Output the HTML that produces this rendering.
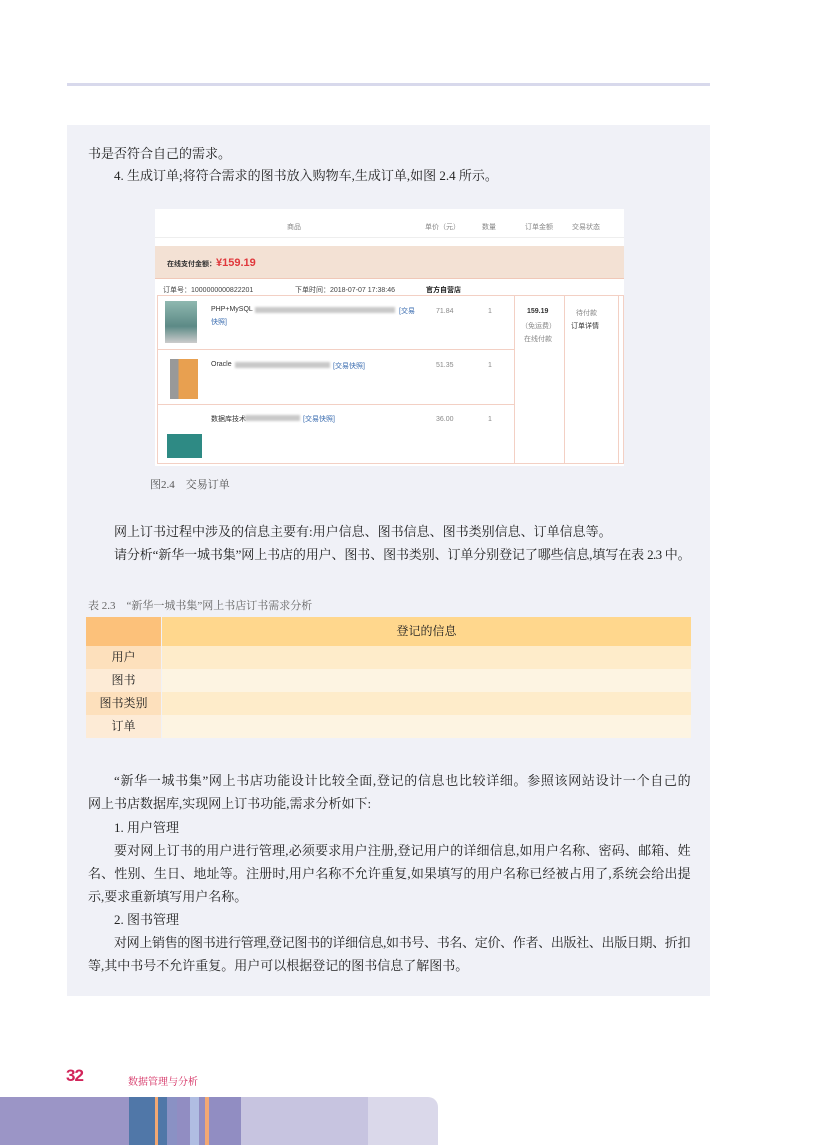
<!DOCTYPE html>
<html><head><meta charset="utf-8"><style>
*{margin:0;padding:0;box-sizing:border-box}
body{width:816px;height:1145px;background:#fff;position:relative;overflow:hidden;font-family:"Liberation Serif","Noto Serif CJK SC",serif;color:#222}
.a{position:absolute}
.ln{position:absolute;left:88px;width:602px;font-size:13px;line-height:16px;white-space:nowrap}
.j{text-align:justify;text-align-last:justify;letter-spacing:-0.6px}
.s{font-family:"Liberation Sans","Noto Sans CJK SC",sans-serif}
.fig{left:155px;top:209px;width:469px;height:257px;background:#fff;font-family:"Liberation Sans","Noto Sans CJK SC",sans-serif;font-size:7px;color:#888}
.bl{background:#c9c9c9;filter:blur(1px);position:absolute;height:6px}
.lk{color:#3a6cb0}
</style></head><body>
<div class="a" style="left:67px;top:83px;width:643px;height:3px;background:#d8d9ec"></div>
<div class="a" style="left:67px;top:125px;width:643px;height:871px;background:#f0f1f7"></div>

<div class="ln" style="top:146px">书是否符合自己的需求。</div>
<div class="ln" style="top:168px;left:114px">4. 生成订单;将符合需求的图书放入购物车,生成订单,如图 2.4 所示。</div>

<div class="a fig">
 <div class="a" style="left:0;top:3px;width:469px;height:26px;border-bottom:1px solid #eee"></div>
 <div class="a" style="left:132px;top:13px">商品</div>
 <div class="a" style="left:270px;top:13px">单价（元）</div>
 <div class="a" style="left:327px;top:13px">数量</div>
 <div class="a" style="left:370px;top:13px">订单金额</div>
 <div class="a" style="left:417px;top:13px">交易状态</div>
 <div class="a" style="left:0;top:37px;width:469px;height:33px;background:#f3e1d4;border-bottom:1px solid #f0c8b8"></div>
 <div class="a" style="left:12px;top:48px;color:#333;font-weight:bold">在线支付金额：<span style="color:#e0383c;font-size:11px">¥159.19</span></div>
 <div class="a" style="left:8px;top:76px;color:#444">订单号：1000000000822201</div>
 <div class="a" style="left:140px;top:76px;color:#444">下单时间：2018-07-07 17:38:46</div>
 <div class="a" style="left:271px;top:76px;color:#222;font-weight:bold">官方自营店</div>
 <div class="a" style="left:2px;top:86px;width:467px;height:169px;border:1px solid #f3d0c4"></div>
 <div class="a" style="left:2px;top:140px;width:358px;height:1px;background:#f3d0c4"></div>
 <div class="a" style="left:2px;top:195px;width:358px;height:1px;background:#f3d0c4"></div>
 <div class="a" style="left:359px;top:86px;width:1px;height:169px;background:#f3d0c4"></div>
 <div class="a" style="left:409px;top:86px;width:1px;height:169px;background:#f3d0c4"></div>
 <div class="a" style="left:463px;top:86px;width:1px;height:169px;background:#f3d0c4"></div>
 <div class="a" style="left:10px;top:92px;width:32px;height:42px;background:linear-gradient(#8fb8b0,#5c8a86 60%,#ccc)"></div>
 <div class="a" style="left:15px;top:150px;width:28px;height:40px;background:linear-gradient(90deg,#999 30%,#e8a050 30%)"></div>
 <div class="a" style="left:12px;top:225px;width:35px;height:24px;background:#2e8a84"></div>
 <div class="a" style="left:56px;top:97px;color:#333">PHP+MySQL</div><div class="bl" style="left:100px;top:98px;width:140px"></div><div class="a lk" style="left:244px;top:97px">[交易</div><div class="a lk" style="left:56px;top:108px">快照]</div>
 <div class="a" style="left:56px;top:152px;color:#333">Oracle</div><div class="bl" style="left:80px;top:153px;width:95px"></div><div class="a lk" style="left:178px;top:152px">[交易快照]</div>
 <div class="a" style="left:56px;top:205px;color:#333">数据库技术</div><div class="bl" style="left:90px;top:206px;width:55px"></div><div class="a lk" style="left:148px;top:205px">[交易快照]</div>
 <div class="a" style="left:281px;top:99px">71.84</div><div class="a" style="left:333px;top:99px">1</div>
 <div class="a" style="left:281px;top:153px">51.35</div><div class="a" style="left:333px;top:153px">1</div>
 <div class="a" style="left:281px;top:207px">36.00</div><div class="a" style="left:333px;top:207px">1</div>
 <div class="a" style="left:372px;top:99px;color:#333;font-weight:bold">159.19</div>
 <div class="a" style="left:366px;top:112px">（免运费）</div>
 <div class="a" style="left:369px;top:125px">在线付款</div>
 <div class="a" style="left:421px;top:99px">待付款</div>
 <div class="a" style="left:416px;top:112px;color:#333">订单详情</div>
</div>

<div class="a" style="left:150px;top:476px;font-size:11px;color:#555">图2.4　交易订单</div>
<div class="ln" style="top:524px;left:114px">网上订书过程中涉及的信息主要有:用户信息、图书信息、图书类别信息、订单信息等。</div>
<div class="ln j" style="top:547px;left:114px;width:576px">请分析“新华一城书集”网上书店的用户、图书、图书类别、订单分别登记了哪些信息,填写在表 2.3 中。</div>
<div class="a" style="left:88px;top:597px;font-size:11px;color:#666">表 2.3　“新华一城书集”网上书店订书需求分析</div>

<div class="a" style="left:86px;top:617px;width:605px;font-size:12px;line-height:23px">
 <div style="display:flex;height:29px;line-height:29px"><div style="width:75px;background:#fcc17a;margin-right:1px"></div><div style="flex:1;background:#ffd78d;text-align:center">登记的信息</div></div>
 <div style="display:flex"><div style="width:75px;background:#fde0bc;margin-right:1px;text-align:center">用户</div><div style="flex:1;background:#feecca"></div></div>
 <div style="display:flex"><div style="width:75px;background:#fdebd6;margin-right:1px;text-align:center">图书</div><div style="flex:1;background:#fdf4e2"></div></div>
 <div style="display:flex"><div style="width:75px;background:#fde0bc;margin-right:1px;text-align:center">图书类别</div><div style="flex:1;background:#feecca"></div></div>
 <div style="display:flex"><div style="width:75px;background:#fdebd6;margin-right:1px;text-align:center">订单</div><div style="flex:1;background:#fdf4e2"></div></div>
</div>

<div class="ln j" style="top:773px;left:114px;width:576px">“新华一城书集”网上书店功能设计比较全面,登记的信息也比较详细。参照该网站设计一个自己的</div>
<div class="ln" style="top:796px">网上书店数据库,实现网上订书功能,需求分析如下:</div>
<div class="ln" style="top:820px;left:114px">1. 用户管理</div>
<div class="ln j" style="top:843px;left:114px;width:576px">要对网上订书的用户进行管理,必须要求用户注册,登记用户的详细信息,如用户名称、密码、邮箱、姓</div>
<div class="ln j" style="top:866px">名、性别、生日、地址等。注册时,用户名称不允许重复,如果填写的用户名称已经被占用了,系统会给出提</div>
<div class="ln" style="top:889px">示,要求重新填写用户名称。</div>
<div class="ln" style="top:912px;left:114px">2. 图书管理</div>
<div class="ln j" style="top:935px;left:114px;width:576px">对网上销售的图书进行管理,登记图书的详细信息,如书号、书名、定价、作者、出版社、出版日期、折扣</div>
<div class="ln" style="top:958px">等,其中书号不允许重复。用户可以根据登记的图书信息了解图书。</div>

<div class="a s" style="left:66px;top:1066px;font-size:17px;font-weight:bold;color:#d2245a;letter-spacing:-1px">32</div>
<div class="a" style="left:128px;top:1073px;font-size:10px;color:#d2245a">数据管理与分析</div>

<div class="a" style="left:0;top:1097px;width:438px;height:48px;background:#dad8ea;border-top-right-radius:10px"></div>
<div class="a" style="left:0;top:1097px;width:368px;height:48px;background:#c7c4e0"></div>
<div class="a" style="left:0;top:1097px;width:241px;height:48px;background:#918dc2"></div>
<div class="a" style="left:0;top:1097px;width:129px;height:48px;background:#9b95c6"></div>
<div class="a" style="left:129px;top:1097px;width:38px;height:48px;background:#5077a8"></div>
<div class="a" style="left:155px;top:1097px;width:3px;height:48px;background:#f3a873"></div>
<div class="a" style="left:167px;top:1097px;width:10px;height:48px;background:#8a91c4"></div>
<div class="a" style="left:190px;top:1097px;width:9px;height:48px;background:#b0bde2"></div>
<div class="a" style="left:205px;top:1097px;width:4px;height:48px;background:#f3a873"></div>
</body></html>
